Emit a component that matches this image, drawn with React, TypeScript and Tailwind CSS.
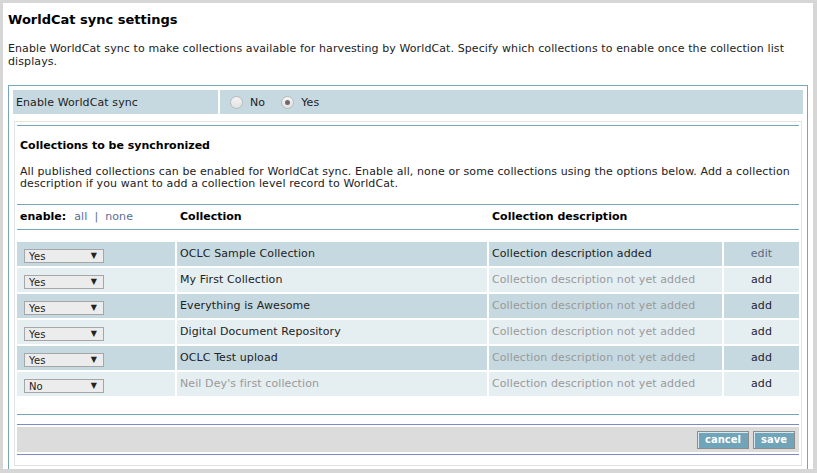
import React from "react"

type Row = {
  enabled: boolean
  name: string
  described: boolean
}

const rows: Row[] = [
  { enabled: true, name: "OCLC Sample Collection", described: true },
  { enabled: true, name: "My First Collection", described: false },
  { enabled: true, name: "Everything is Awesome", described: false },
  { enabled: true, name: "Digital Document Repository", described: false },
  { enabled: true, name: "OCLC Test upload", described: false },
  { enabled: false, name: "Neil Dey's first collection", described: false },
]

function Radio({ checked, label }: { checked?: boolean; label: string }) {
  return (
    <span className="flex items-center gap-[7px]">
      <span className="flex h-[13px] w-[13px] items-center justify-center rounded-full border border-[#b9b9b9] bg-gradient-to-b from-[#f4f4f4] to-[#e2e2e2]">
        {checked && <span className="h-[5px] w-[5px] rounded-full bg-[#6b6b6b]" />}
      </span>
      <span className="mt-[3px]">{label}</span>
    </span>
  )
}

function FakeSelect({ value }: { value: string }) {
  return (
    <div className="mt-[7px] ml-[7px] flex h-[14px] w-[80px] items-center justify-between border border-[#a6a6a6] bg-[#ececec] pl-[4px] pr-[6px] text-[10px] leading-none text-[#222]">
      <span className="mt-[2px]">{value}</span>
      <span className="text-[8px]">▼</span>
    </div>
  )
}

export default function App() {
  return (
    <div className="h-[473px] w-[817px] overflow-hidden bg-[#d6d6d6] pt-[3px] pl-[3px] font-['DejaVu_Sans',sans-serif] text-[11px] tracking-[0.1px] text-[#222]">
      <div className="h-[466px] w-[810px] overflow-hidden bg-white px-[5px]">
        <h1 className="pt-[8px] text-[13px] font-bold leading-[18px] tracking-normal text-black">WorldCat sync settings</h1>
        <p className="mt-[13px] leading-[13px]">
          Enable WorldCat sync to make collections available for harvesting by WorldCat. Specify which collections to enable once the collection list displays.
        </p>

        {/* Settings box */}
        <div className="mt-[17px] border border-[#76a7b8] p-[4px]">
          <div className="flex h-[24px] gap-[2px]">
            <div className="flex w-[205px] items-center bg-[#c6d9e0] pt-[2px] pl-[3px]">Enable WorldCat sync</div>
            <div className="flex flex-1 items-center gap-[16px] bg-[#c6d9e0] pl-[10px]">
              <Radio label="No" />
              <Radio label="Yes" checked />
            </div>
          </div>

          <div className="mx-[1px] mt-[7px] border border-[#e4e4e4] px-[2px] pt-[3px] pb-[10px]">
            <div className="border-t border-[#76a7b8] px-[3px] pt-[12px] pb-[14px]">
              <h2 className="text-[11px] font-bold leading-[15px] tracking-normal text-black">Collections to be synchronized</h2>
              <p className="mt-[13px] leading-[12px]">
                All published collections can be enabled for WorldCat sync. Enable all, none or some collections using the options below. Add a collection description if you want to add a collection level record to WorldCat.
              </p>
            </div>

            {/* Table header */}
            <div className="grid h-[26px] grid-cols-[158px_310px_233px_75px] items-center gap-x-[2px] border-y border-[#76a7b8]">
              <div className="pl-[3px]">
                <span className="font-bold tracking-normal text-black">enable:</span>
                <span className="ml-[8px] text-[#5a6d96]">all</span>
                <span className="mx-[7px] text-[#5a6d96]">|</span>
                <span className="text-[#5a6d96]">none</span>
              </div>
              <div className="pl-[3px] font-bold tracking-normal text-black">Collection</div>
              <div className="pl-[3px] font-bold tracking-normal text-black">Collection description</div>
              <div />
            </div>

            {/* Rows */}
            <div className="mt-[12px] grid grid-cols-[158px_310px_233px_75px] gap-[2px]">
              {rows.map((r, i) => {
                const bg = i % 2 === 0 ? "bg-[#c6d9e0]" : "bg-[#e5eef1]"
                return (
                  <React.Fragment key={r.name}>
                    <div className={`h-[24px] ${bg}`}>
                      <FakeSelect value={r.enabled ? "Yes" : "No"} />
                    </div>
                    <div className={`flex h-[24px] items-center pt-[1px] pl-[3px] ${bg} ${r.enabled ? "text-[#222]" : "text-[#9a9a9a]"}`}>
                      {r.name}
                    </div>
                    <div className={`flex h-[24px] items-center pt-[1px] pl-[3px] ${bg} ${r.described ? "text-[#222]" : "text-[#9a9a9a]"}`}>
                      {r.described ? "Collection description added" : "Collection description not yet added"}
                    </div>
                    <div className={`flex h-[24px] items-center justify-center pt-[1px] ${bg} ${r.described ? "text-[#5a6a80]" : "text-[#223]"}`}>
                      {r.described ? "edit" : "add"}
                    </div>
                  </React.Fragment>
                )
              })}
            </div>

            {/* Footer */}
            <div className="mt-[18px] border-t border-[#76a7b8] pt-[9px]">
              <div className="border-y border-[#7b8bc0] py-[2px]">
                <div className="flex h-[25px] items-center justify-end gap-[4px] bg-[#dcdcdc] pr-[4px]">
                  <button className="h-[18px] border border-[#8c8c8c] bg-[#70a4b9] px-[7px] text-[10px] font-bold leading-none tracking-normal text-white shadow-[inset_1px_1px_0_#d8e8ee]">
                    cancel
                  </button>
                  <button className="h-[18px] border border-[#8c8c8c] bg-[#70a4b9] px-[7px] text-[10px] font-bold leading-none tracking-normal text-white shadow-[inset_1px_1px_0_#d8e8ee]">
                    save
                  </button>
                </div>
              </div>
            </div>
          </div>
        </div>
      </div>
    </div>
  )
}
